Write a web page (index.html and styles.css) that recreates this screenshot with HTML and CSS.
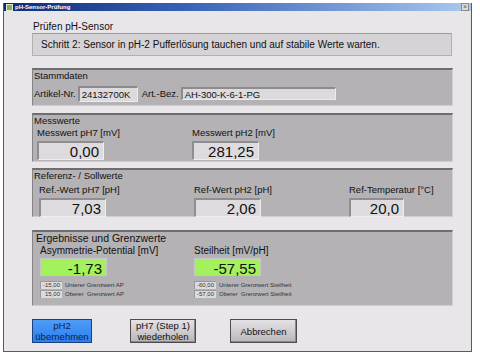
FILE: index.html
```html
<!DOCTYPE html>
<html lang="de">
<head>
    <meta charset="UTF-8">
    <title>pH-Sensor-Prüfung</title>
    <link rel="stylesheet" href="styles.css">
</head>
<body>
    <div class="window">
        <div class="titlebar">
            <span class="app-icon"></span>
            <span class="title">pH-Sensor-Prüfung</span>
            <span class="close">&times;</span>
        </div>

        <div class="content">
            <h1>Prüfen pH-Sensor</h1>
            <div class="instruction">Schritt 2: Sensor in pH-2 Pufferlösung tauchen und auf stabile Werte warten.</div>

            <div class="panel stamm">
                <div class="panel-title">Stammdaten</div>
                <div class="stamm-row">
                    <span class="field-label">Artikel-Nr.</span>
                    <span class="text-box art-nr">24132700K</span>
                    <span class="field-label">Art.-Bez.</span>
                    <span class="text-box art-bez">AH-300-K-6-1-PG</span>
                </div>
            </div>

            <div class="panel mess">
                <div class="panel-title">Messwerte</div>
                <div class="cols">
                    <div class="col">
                        <div class="col-label">Messwert pH7 [mV]</div>
                        <div class="value">0,00</div>
                    </div>
                    <div class="col">
                        <div class="col-label">Messwert pH2 [mV]</div>
                        <div class="value">281,25</div>
                    </div>
                </div>
            </div>

            <div class="panel ref">
                <div class="panel-title">Referenz- / Sollwerte</div>
                <div class="cols">
                    <div class="col">
                        <div class="col-label">Ref.-Wert pH7 [pH]</div>
                        <div class="value">7,03</div>
                    </div>
                    <div class="col">
                        <div class="col-label">Ref-Wert pH2 [pH]</div>
                        <div class="value">2,06</div>
                    </div>
                    <div class="col">
                        <div class="col-label">Ref-Temperatur [°C]</div>
                        <div class="value temp">20,0</div>
                    </div>
                </div>
            </div>

            <div class="panel result">
                <div class="panel-title big">Ergebnisse und Grenzwerte</div>
                <div class="cols">
                    <div class="col">
                        <div class="col-label big">Asymmetrie-Potential [mV]</div>
                        <div class="value ok">-1,73</div>
                        <div class="limits">
                            <div class="limit"><span class="limit-box">-15,00</span>Unterer Grenzwert AP</div>
                            <div class="limit"><span class="limit-box">15,00</span>Oberer&nbsp; Grenzwert AP</div>
                        </div>
                    </div>
                    <div class="col">
                        <div class="col-label big">Steilheit [mV/pH]</div>
                        <div class="value ok">-57,55</div>
                        <div class="limits">
                            <div class="limit"><span class="limit-box">-60,00</span>Unterer Grenzwert Steilheit</div>
                            <div class="limit"><span class="limit-box">-57,00</span>Oberer&nbsp; Grenzwert Steilheit</div>
                        </div>
                    </div>
                </div>
            </div>

            <div class="buttons">
                <button class="btn primary">pH2<br>übernehmen</button>
                <button class="btn">pH7 (Step 1)<br>wiederholen</button>
                <button class="btn">Abbrechen</button>
            </div>
        </div>
    </div>
</body>
</html>
```

FILE: styles.css
```css
body {
    margin: 0;
    background: #ffffff;
    font-family: 'Liberation Sans', Arial, sans-serif;
    color: #111;
}
.window {
    margin: 3px 0 0 3px;
    width: 467px;
    height: 348px;
    background: #e9e6ea;
    border: 1px solid #5c5a5c;
    border-top: none;
}
.titlebar {
    height: 8px;
    display: flex;
    align-items: center;
    background: linear-gradient(90deg, #0c2a78, #3a64b8 40%, #a9c9ef);
    padding: 0 2px;
}
.app-icon {
    width: 5px;
    height: 5px;
    background: #7fb060;
    border: 1px solid #e0e8d0;
    margin-right: 2px;
}
.title {
    color: #fff;
    font-size: 6px;
    font-weight: bold;
    flex: 1;
}
.close {
    width: 6px;
    height: 6px;
    font-size: 7px;
    line-height: 6px;
    text-align: center;
    color: #555;
    background: #dcdcdc;
    border: 1px solid #8a8a8a;
}
.content {
    padding: 0 0 0 28px;
}
h1 {
    font-size: 10px;
    font-weight: normal;
    line-height: 13px;
    margin: 9px 0 0 1px;
}
.instruction {
    width: 410px;
    height: 21px;
    line-height: 21px;
    padding-left: 8px;
    font-size: 10px;
    background: #d5d3d6;
    border: 1px solid #b2b0b2;
    border-top-color: #9c9a9c;
}
.panel {
    width: 419px;
    background: #b4b2b5;
    border-top: 2px solid #6f6d70;
    border-left: 1px solid #858386;
    border-right: 1px solid #cfcdd0;
    border-bottom: 1px solid #cfcdd0;
}
.panel-title {
    font-size: 9.5px;
    line-height: 12px;
    padding-left: 1px;
}
.panel-title.big {
    font-size: 10.5px;
    line-height: 13px;
    padding-left: 3px;
}
.stamm {
    margin-top: 12px;
    height: 35px;
}
.stamm-row {
    display: flex;
    align-items: center;
    margin-top: 4px;
    height: 15px;
    font-size: 9.5px;
}
.field-label {
    padding-left: 1px;
}
.text-box {
    background: #dcdadd;
    border: 1px solid #eceaed;
    border-top: 2px solid #8d8b8e;
    border-left: 2px solid #8d8b8e;
    padding: 0 2px;
    line-height: 11px;
}
.art-nr {
    width: 53px;
    height: 12px;
    margin: 0 3px 0 2px;
    padding-top: 1px;
}
.art-bez {
    width: 148px;
    height: 10px;
    margin-left: 2px;
}
.mess {
    margin-top: 7px;
    height: 46px;
}
.ref {
    margin-top: 6px;
    height: 46px;
}
.result {
    margin-top: 13px;
    height: 73px;
}
.cols {
    display: grid;
    grid-template-columns: 155px 155px auto;
}
.mess .cols {
    padding-left: 4px;
}
.ref .cols {
    padding-left: 6px;
    margin-top: 2px;
}
.result .cols {
    padding-left: 7px;
    grid-template-columns: 154px 154px;
}
.col-label {
    font-size: 9.5px;
    line-height: 12px;
    margin-bottom: 2px;
}
.col-label.big {
    font-size: 10px;
    margin-bottom: 1px;
}
.value {
    width: 60px;
    height: 16px;
    line-height: 17px;
    padding-right: 4px;
    text-align: right;
    font-size: 15px;
    background: #dddbde;
    border: 1px solid #efedf0;
    border-top: 2px solid #8f8d90;
    border-left: 2px solid #8f8d90;
}
.value.temp {
    width: 48px;
}
.value.ok {
    width: 60px;
    height: 15px;
    background: #a3f15c;
    border-color: #c8c6c9;
}
.limits {
    margin-top: 5px;
    display: flex;
    flex-direction: column;
    gap: 1px;
}
.limit {
    display: flex;
    align-items: center;
    font-size: 6px;
    color: #333;
    height: 8px;
}
.limit-box {
    width: 19px;
    height: 7px;
    line-height: 7px;
    margin-right: 3px;
    padding-right: 2px;
    text-align: right;
    background: #dddbde;
    border-top: 1px solid #9a989b;
    border-left: 1px solid #9a989b;
}
.buttons {
    display: flex;
    gap: 38px;
    margin-top: 13px;
}
.btn {
    width: 66px;
    height: 24px;
    padding: 0;
    font-family: 'Liberation Sans', Arial, sans-serif;
    font-size: 9.5px;
    line-height: 11px;
    color: #111;
    background: linear-gradient(#e4e2e5, #b9b7ba);
    border: 1px solid #4e4c4f;
    box-shadow: inset -1px -1px 0 #8a888b;
}
.btn:last-child {
    width: 67px;
    margin-left: -4px;
}
.btn.primary {
    width: 60px;
    background: linear-gradient(#4f9cf7, #2b7fee);
    border-color: #1c3f80;
    color: #0d1d52;
    box-shadow: none;
}
```
